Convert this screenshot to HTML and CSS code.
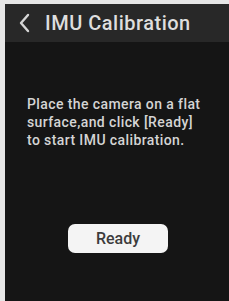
FILE: index.html
```html
<!DOCTYPE html>
<html lang="en">
<head>
    <meta charset="UTF-8">
    <meta name="viewport" content="width=device-width, initial-scale=1.0">
    <title>IMU Calibration</title>
    <link rel="stylesheet" href="styles.css">
</head>
<body>

    <div class="screen">
        <header class="top-bar">
            <svg class="back" width="12" height="20" viewBox="0 0 12 20">
                <polyline points="10,2 3,10 10,18" fill="none" stroke="#d6d6d6" stroke-width="2.4" stroke-linecap="round" stroke-linejoin="round"/>
            </svg>
            <h1>IMU Calibration</h1>
        </header>

        <main class="content">
            <p class="info">Place the camera on a flat<br>surface,and click [Ready]<br>to start IMU calibration.</p>
            <button class="ready-btn">Ready</button>
        </main>
    </div>

</body>
</html>
```

FILE: styles.css
```css
html, body {
    height: 100%;
}

body {
    margin: 0;
    padding: 4px 0 0 5px;
    box-sizing: border-box;
    background-color: #e6e6e6;
    font-family: Roboto, "Liberation Sans", sans-serif;
}

.screen {
    height: 100%;
    background-color: #151515;
    display: flex;
    flex-direction: column;
}

.top-bar {
    height: 38px;
    background-color: #282828;
    display: flex;
    align-items: center;
    padding-left: 13px;
}

.back {
    display: block;
}

.top-bar h1 {
    margin: 0 0 0 15px;
    font-size: 20px;
    font-weight: 500;
    letter-spacing: 0.5px;
    color: #dedede;
}

.content {
    display: flex;
    flex-direction: column;
    align-items: flex-start;
}

.info {
    margin: 53px 0 0 22px;
    font-size: 14px;
    font-weight: 500;
    line-height: 18px;
    letter-spacing: 0.4px;
    color: #d4d4d4;
}

.ready-btn {
    margin: 75px 0 0 63px;
    width: 100px;
    height: 29px;
    border: none;
    border-radius: 7px;
    background-color: #f4f4f4;
    color: #3c3c3c;
    font-family: Roboto, "Liberation Sans", sans-serif;
    font-size: 16px;
    font-weight: 500;
    padding: 0;
}
```
